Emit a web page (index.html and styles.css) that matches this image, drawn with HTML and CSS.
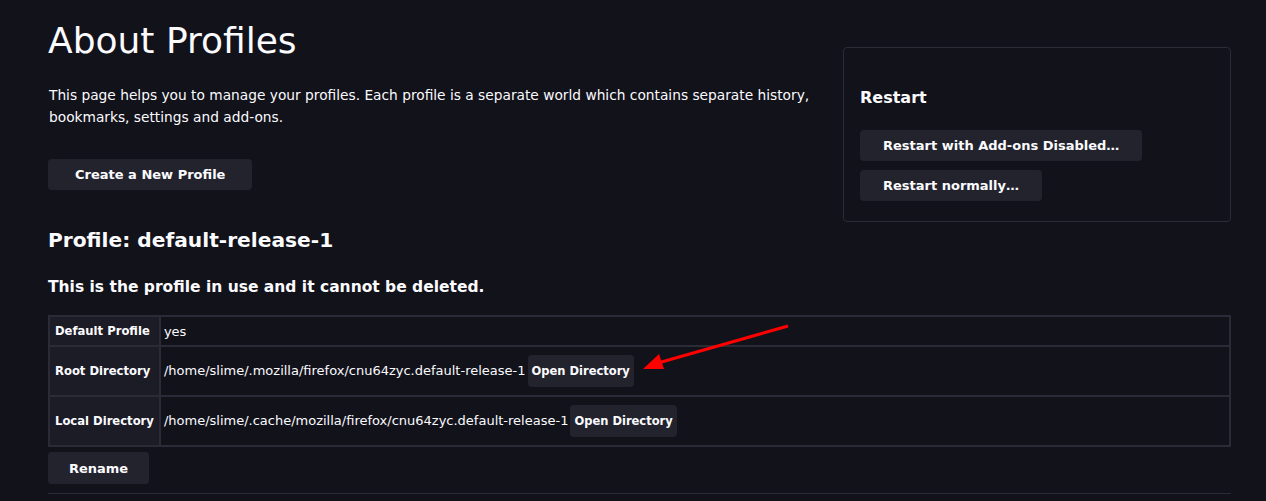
FILE: index.html
```html
<!DOCTYPE html>
<html>
<head>
<meta charset="utf-8">
<link rel="stylesheet" href="styles.css">
</head>
<body>
<div class="page">
  <div class="top">
    <div class="intro">
      <h1 class="title">About Profiles</h1>
      <p class="lead">This page helps you to manage your profiles. Each profile is a separate world which contains separate history, bookmarks, settings and add-ons.</p>
      <button class="btn btn-create">Create a New Profile</button>
    </div>
    <aside class="action-box">
      <h3 class="box-title">Restart</h3>
      <div class="box-actions">
        <button class="btn">Restart with Add-ons Disabled…</button>
        <button class="btn">Restart normally…</button>
      </div>
    </aside>
  </div>

  <h2 class="profile-name">Profile: default-release-1</h2>
  <h3 class="profile-note">This is the profile in use and it cannot be deleted.</h3>

  <table class="profile-table">
    <tr class="row-short">
      <th>Default Profile</th>
      <td>yes</td>
    </tr>
    <tr class="row-tall">
      <th>Root Directory</th>
      <td>/home/slime/.mozilla/firefox/cnu64zyc.default-release-1<button class="btn btn-small">Open Directory</button></td>
    </tr>
    <tr class="row-tall">
      <th>Local Directory</th>
      <td>/home/slime/.cache/mozilla/firefox/cnu64zyc.default-release-1<button class="btn btn-small">Open Directory</button></td>
    </tr>
  </table>
  <div class="row-actions">
    <button class="btn btn-rename">Rename</button>
  </div>
  <hr class="sep">

  <svg class="arrow" width="160" height="60" viewBox="0 0 160 60">
    <line x1="148" y1="6" x2="18" y2="43" stroke="#f00" stroke-width="3"/>
    <polygon points="3,49 19,34 24,49" fill="#f00"/>
  </svg>
</div>
</body>
</html>
```

FILE: styles.css
```css
html, body {
  margin: 0;
  padding: 0;
  background: #12121b;
  color: #fbfbfe;
  font-family: "DejaVu Sans", sans-serif;
  overflow: hidden;
}

.page {
  position: relative;
  padding: 0 35px 0 48px;
}

.top {
  display: flex;
  align-items: flex-start;
  gap: 16px;
}

.intro {
  flex: 1;
}

.title {
  margin: 0;
  padding-top: 18px;
  font-size: 36px;
  font-weight: normal;
  line-height: 46px;
}

.lead {
  margin: 20px 0 0 1px;
  font-size: 13.75px;
  line-height: 22px;
}

.btn {
  font-family: inherit;
  background: #23232e;
  color: #fbfbfe;
  border: none;
  border-radius: 4px;
  font-weight: bold;
  font-size: 13px;
  padding: 0 23px;
  height: 31px;
  cursor: pointer;
}

.btn-create {
  margin-top: 31px;
  padding: 0 27px;
}

.action-box {
  width: 388px;
  box-sizing: border-box;
  margin-top: 47px;
  height: 175px;
  border: 1px solid #2b2b37;
  border-radius: 4px;
  padding: 0 16px;
}

.box-title {
  margin: 39px 0 0;
  font-size: 16px;
  line-height: 22px;
}

.box-actions {
  margin-top: 21px;
  display: flex;
  flex-direction: column;
  align-items: flex-start;
  gap: 9px;
}

.profile-name {
  margin: 4px 0 0;
  font-size: 20.2px;
  line-height: 28px;
}

.profile-note {
  margin: 21px 0 0;
  font-size: 15.5px;
  line-height: 24px;
}

.profile-table {
  margin-top: 16px;
  width: 100%;
  border-collapse: collapse;
  border: 2px solid #2b2b37;
  font-size: 13px;
}

.profile-table th {
  background: #1c1c27;
  text-align: left;
  font-weight: bold;
  font-size: 11.6px;
  padding: 0 5px;
  white-space: nowrap;
  width: 98px;
  border: 2px solid #2b2b37;
}

.profile-table td {
  padding: 0 3px;
  border: 2px solid #2b2b37;
  white-space: nowrap;
}

.row-short {
  height: 30px;
}

.row-tall {
  height: 50px;
}

.btn-small {
  padding: 0 4px;
  height: 32px;
  font-size: 11.5px;
  margin-left: 2px;
  vertical-align: middle;
}

.row-actions {
  margin-top: 5px;
}

.btn-rename {
  width: 101px;
  padding: 0;
  height: 32px;
}

.sep {
  margin: 9px 0 0;
  border: none;
  border-top: 1px solid #2b2b37;
}

.arrow {
  position: absolute;
  left: 640px;
  top: 320px;
}
```
